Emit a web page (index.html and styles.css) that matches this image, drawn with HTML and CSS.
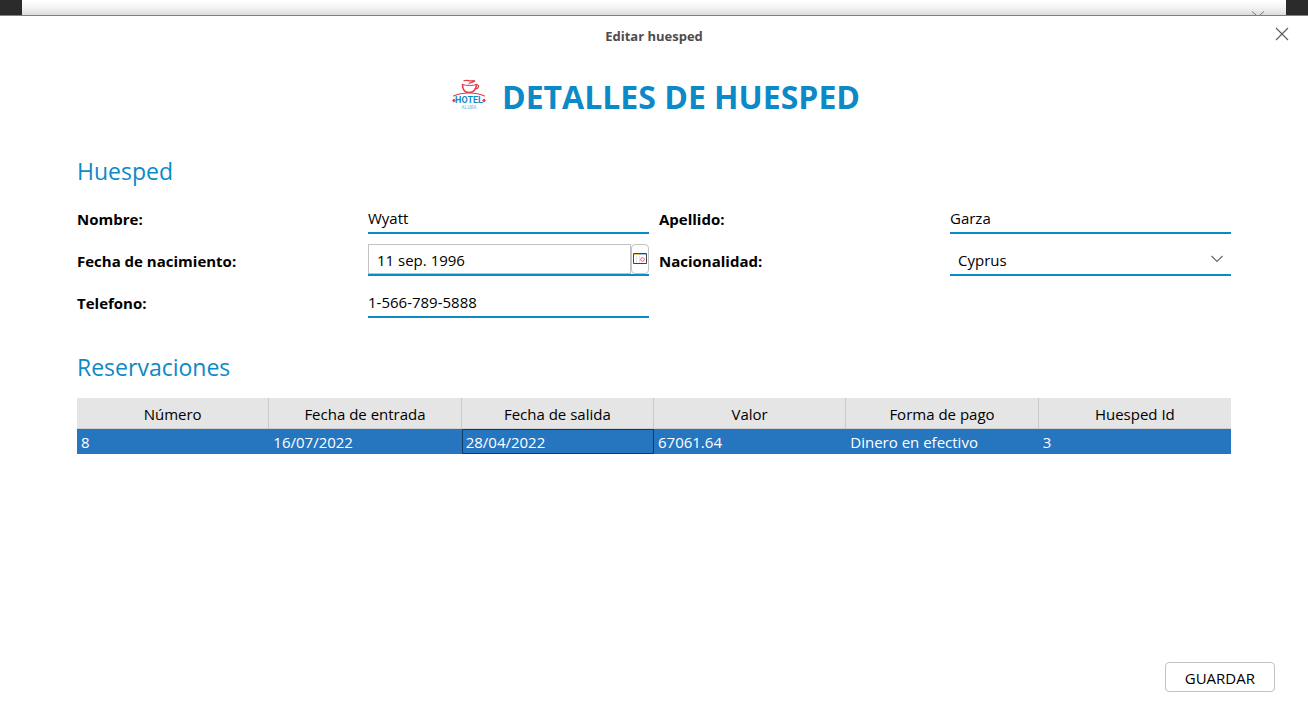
FILE: index.html
```html
<!DOCTYPE html>
<html lang="es">
<head>
<meta charset="utf-8">
<meta name="viewport" content="width=device-width, initial-scale=1">
<title>Editar huesped</title>
<link rel="stylesheet" href="styles.css">
</head>
<body>
<div class="backdrop" aria-hidden="true">
  <div class="back-window">
    <svg class="back-chevron" width="14" height="4" viewBox="0 0 14 4"><path d="M1 0.500l4 3.500M13 0.500l-4 3.500" fill="none" stroke="#777"/></svg>
  </div>
</div>
<div class="dialog" role="dialog" aria-labelledby="dialog-title">
  <header class="titlebar">
    <span class="titlebar-text" id="dialog-title">Editar huesped</span>
    <button class="close" type="button" aria-label="Cerrar">
      <svg width="14" height="14" viewBox="0 0 14 14"><path d="M1 1l12 12M13 1L1 13" fill="none" stroke="#5a5a5a" stroke-width="1.100"/></svg>
    </button>
  </header>
  <form class="content">
    <div class="heading">
      <svg class="logo" width="34" height="32" viewBox="0 0 34 32" role="img" aria-label="Hotel Alura">
        <g fill="none" stroke="#e63a46" stroke-linecap="round">
          <path d="M10.500 5.500c0 5 2 8 6.500 8s7-3 7.500-8" stroke-width="1.600"/>
          <path d="M10.500 5.500c4 1.500 10 1.500 14 0" stroke-width="1"/>
          <path d="M24.500 6c3-.5 3 3.500-1.500 4" stroke-width="1.200"/>
          <path d="M12 1.800c3-1.500 5 .5 8 0s4 .2 1 1.200c-2 .8-4 .8-4 1.800" stroke-width="1.200"/>
          <path d="M1.500 17c8-4 23-4 31 0" stroke-width="1.100"/>
        </g>
        <path d="M2 19.500l2 2-2 2-2-2zM32 19.500l2 2-2 2-2-2z" fill="#e63a46"/>
        <text class="logo-name" x="17" y="24" text-anchor="middle">HOTEL</text>
        <text class="logo-sub" x="17" y="30" text-anchor="middle">ALURA</text>
      </svg>
      <h1 class="page-title">DETALLES DE HUESPED</h1>
    </div>

    <h2 class="section-title">Huesped</h2>
    <div class="fields">
      <label class="label" for="nombre">Nombre:</label>
      <input class="input" id="nombre" type="text" value="Wyatt">
      <label class="label" for="apellido">Apellido:</label>
      <input class="input" id="apellido" type="text" value="Garza">

      <label class="label" for="fecha">Fecha de nacimiento:</label>
      <div class="date">
        <input class="date-input" id="fecha" type="text" value="11 sep. 1996">
        <button class="date-button" type="button" aria-label="Elegir fecha">
          <svg width="14" height="12" viewBox="0 0 14 12">
            <path d="M0.500 0.500h13v10h-13z" fill="#fff" stroke="#444"/>
            <path d="M1 1.500h5" stroke="#e8bd78"/><path d="M6 1.500h7" stroke="#a3bce0"/>
            <path d="M3.500 3v7M6.500 3v7" stroke="#e4e4e4"/>
            <circle cx="9.500" cy="6.500" r="1.800" fill="none" stroke="#ea5f6a"/>
          </svg>
        </button>
      </div>
      <label class="label" for="nacionalidad">Nacionalidad:</label>
      <div class="select-wrap">
        <select class="select" id="nacionalidad"><option>Cyprus</option></select>
        <svg class="chevron" width="14" height="8" viewBox="0 0 14 8"><path d="M1.500 1l5.500 5.500L12.500 1" fill="none" stroke="#6a6a6a" stroke-width="1.200"/></svg>
      </div>

      <label class="label" for="telefono">Telefono:</label>
      <input class="input" id="telefono" type="text" value="1-566-789-5888">
    </div>

    <h2 class="section-title">Reservaciones</h2>
    <table class="table">
      <thead>
        <tr><th>Número</th><th>Fecha de entrada</th><th>Fecha de salida</th><th>Valor</th><th>Forma de pago</th><th>Huesped Id</th></tr>
      </thead>
      <tbody>
        <tr><td>8</td><td>16/07/2022</td><td class="focused">28/04/2022</td><td>67061.64</td><td>Dinero en efectivo</td><td>3</td></tr>
      </tbody>
    </table>
  </form>
  <footer class="actions">
    <button class="save" type="button">GUARDAR</button>
  </footer>
</div>
</body>
</html>
```
FILE: styles.css
```css
* {
  box-sizing: border-box;
}

body {
  margin: 0;
  min-height: 100vh;
  display: flex;
  flex-direction: column;
  background: #fff;
  color: #000;
  font: 15px/20px "Open Sans", "Noto Sans", sans-serif;
}

input,
select,
button {
  margin: 0;
  padding: 0;
  border: 0;
  border-radius: 0;
  background: none;
  color: inherit;
  font: inherit;
}

.backdrop {
  height: 15px;
  padding: 0 22px;
  background: #2b2b2b;
}

.back-window {
  height: 100%;
  display: flex;
  justify-content: flex-end;
  align-items: flex-end;
  padding-right: 21px;
  background: linear-gradient(#fff, #f4f4f4 50%, #dcdcdc);
}

.back-chevron {
  display: block;
}

.dialog {
  flex: 1;
  display: flex;
  flex-direction: column;
  border-top: 1px solid #8f7f62;
}

.titlebar {
  display: grid;
  grid-template-columns: 1fr auto 1fr;
  align-items: center;
  height: 40px;
  padding: 0 16px;
}

.titlebar-text {
  grid-column: 2;
  color: #4d4d4d;
  font-size: 13px;
  font-weight: 700;
}

.close {
  justify-self: end;
  display: grid;
  place-items: center;
  width: 20px;
  height: 24px;
  margin-bottom: 4px;
}

.content {
  flex: 1;
  padding: 19px 77px 0;
}

.heading {
  display: flex;
  justify-content: center;
  align-items: center;
  gap: 16px;
  padding: 0 0 3px 4px;
}

.logo {
  margin-bottom: 4px;
}

.logo-name {
  fill: #128ac8;
  font: 700 9px Roboto, sans-serif;
}

.logo-sub {
  fill: #6cb8de;
  font: 5px "Liberation Mono", monospace;
}

.page-title {
  margin: 0;
  color: #0c8ac7;
  font-size: 32px;
  line-height: 44px;
  font-weight: 700;
}

.section-title {
  margin: 33px 0 15px;
  color: #0c8ac7;
  font-size: 23px;
  line-height: 32px;
  font-weight: 400;
}

.fields {
  display: grid;
  grid-template-columns: repeat(4, minmax(0, 1fr));
  grid-auto-rows: 32px;
  gap: 10px;
}

.label {
  align-self: center;
  padding-top: 2px;
  font-weight: 700;
}

.input,
.date,
.select-wrap {
  width: 100%;
  height: 32px;
  border-bottom: 2px solid #0c8ac7;
}

.input {
  padding-top: 2px;
}

.date {
  display: flex;
}

.date-input {
  flex: 1;
  min-width: 0;
  padding: 2px 0 0 8px;
  border: 1px solid #c2c2c2;
}

.date-button {
  display: grid;
  place-items: center;
  width: 18px;
  border: 1px solid #c2c2c2;
  border-radius: 4px;
}

.select-wrap {
  display: grid;
  align-items: center;
}

.select {
  grid-area: 1 / 1;
  width: 100%;
  height: 30px;
  padding: 2px 0 0 8px;
  appearance: none;
}

.chevron {
  grid-area: 1 / 1;
  justify-self: end;
  margin-right: 7px;
  pointer-events: none;
}

.table {
  width: 100%;
  table-layout: fixed;
  border-collapse: separate;
  border-spacing: 0;
}

.table th {
  height: 31px;
  padding: 2px 0 0;
  border-right: 1px solid #cacaca;
  border-bottom: 1px solid #cfcfcf;
  background: #e5e5e5;
  font-weight: 400;
}

.table th:last-child {
  border-right: 0;
}

.table td {
  height: 25px;
  padding: 0 4px;
  background: #2675bf;
  color: #fff;
}

.table .focused {
  padding: 0 3px;
  border: 1px solid #133b60;
}

.actions {
  display: flex;
  justify-content: flex-end;
  padding: 0 33px 34px;
}

.save {
  height: 30px;
  padding: 1px 19px 0;
  border: 1px solid #c2c2c2;
  border-radius: 4px;
}
```
